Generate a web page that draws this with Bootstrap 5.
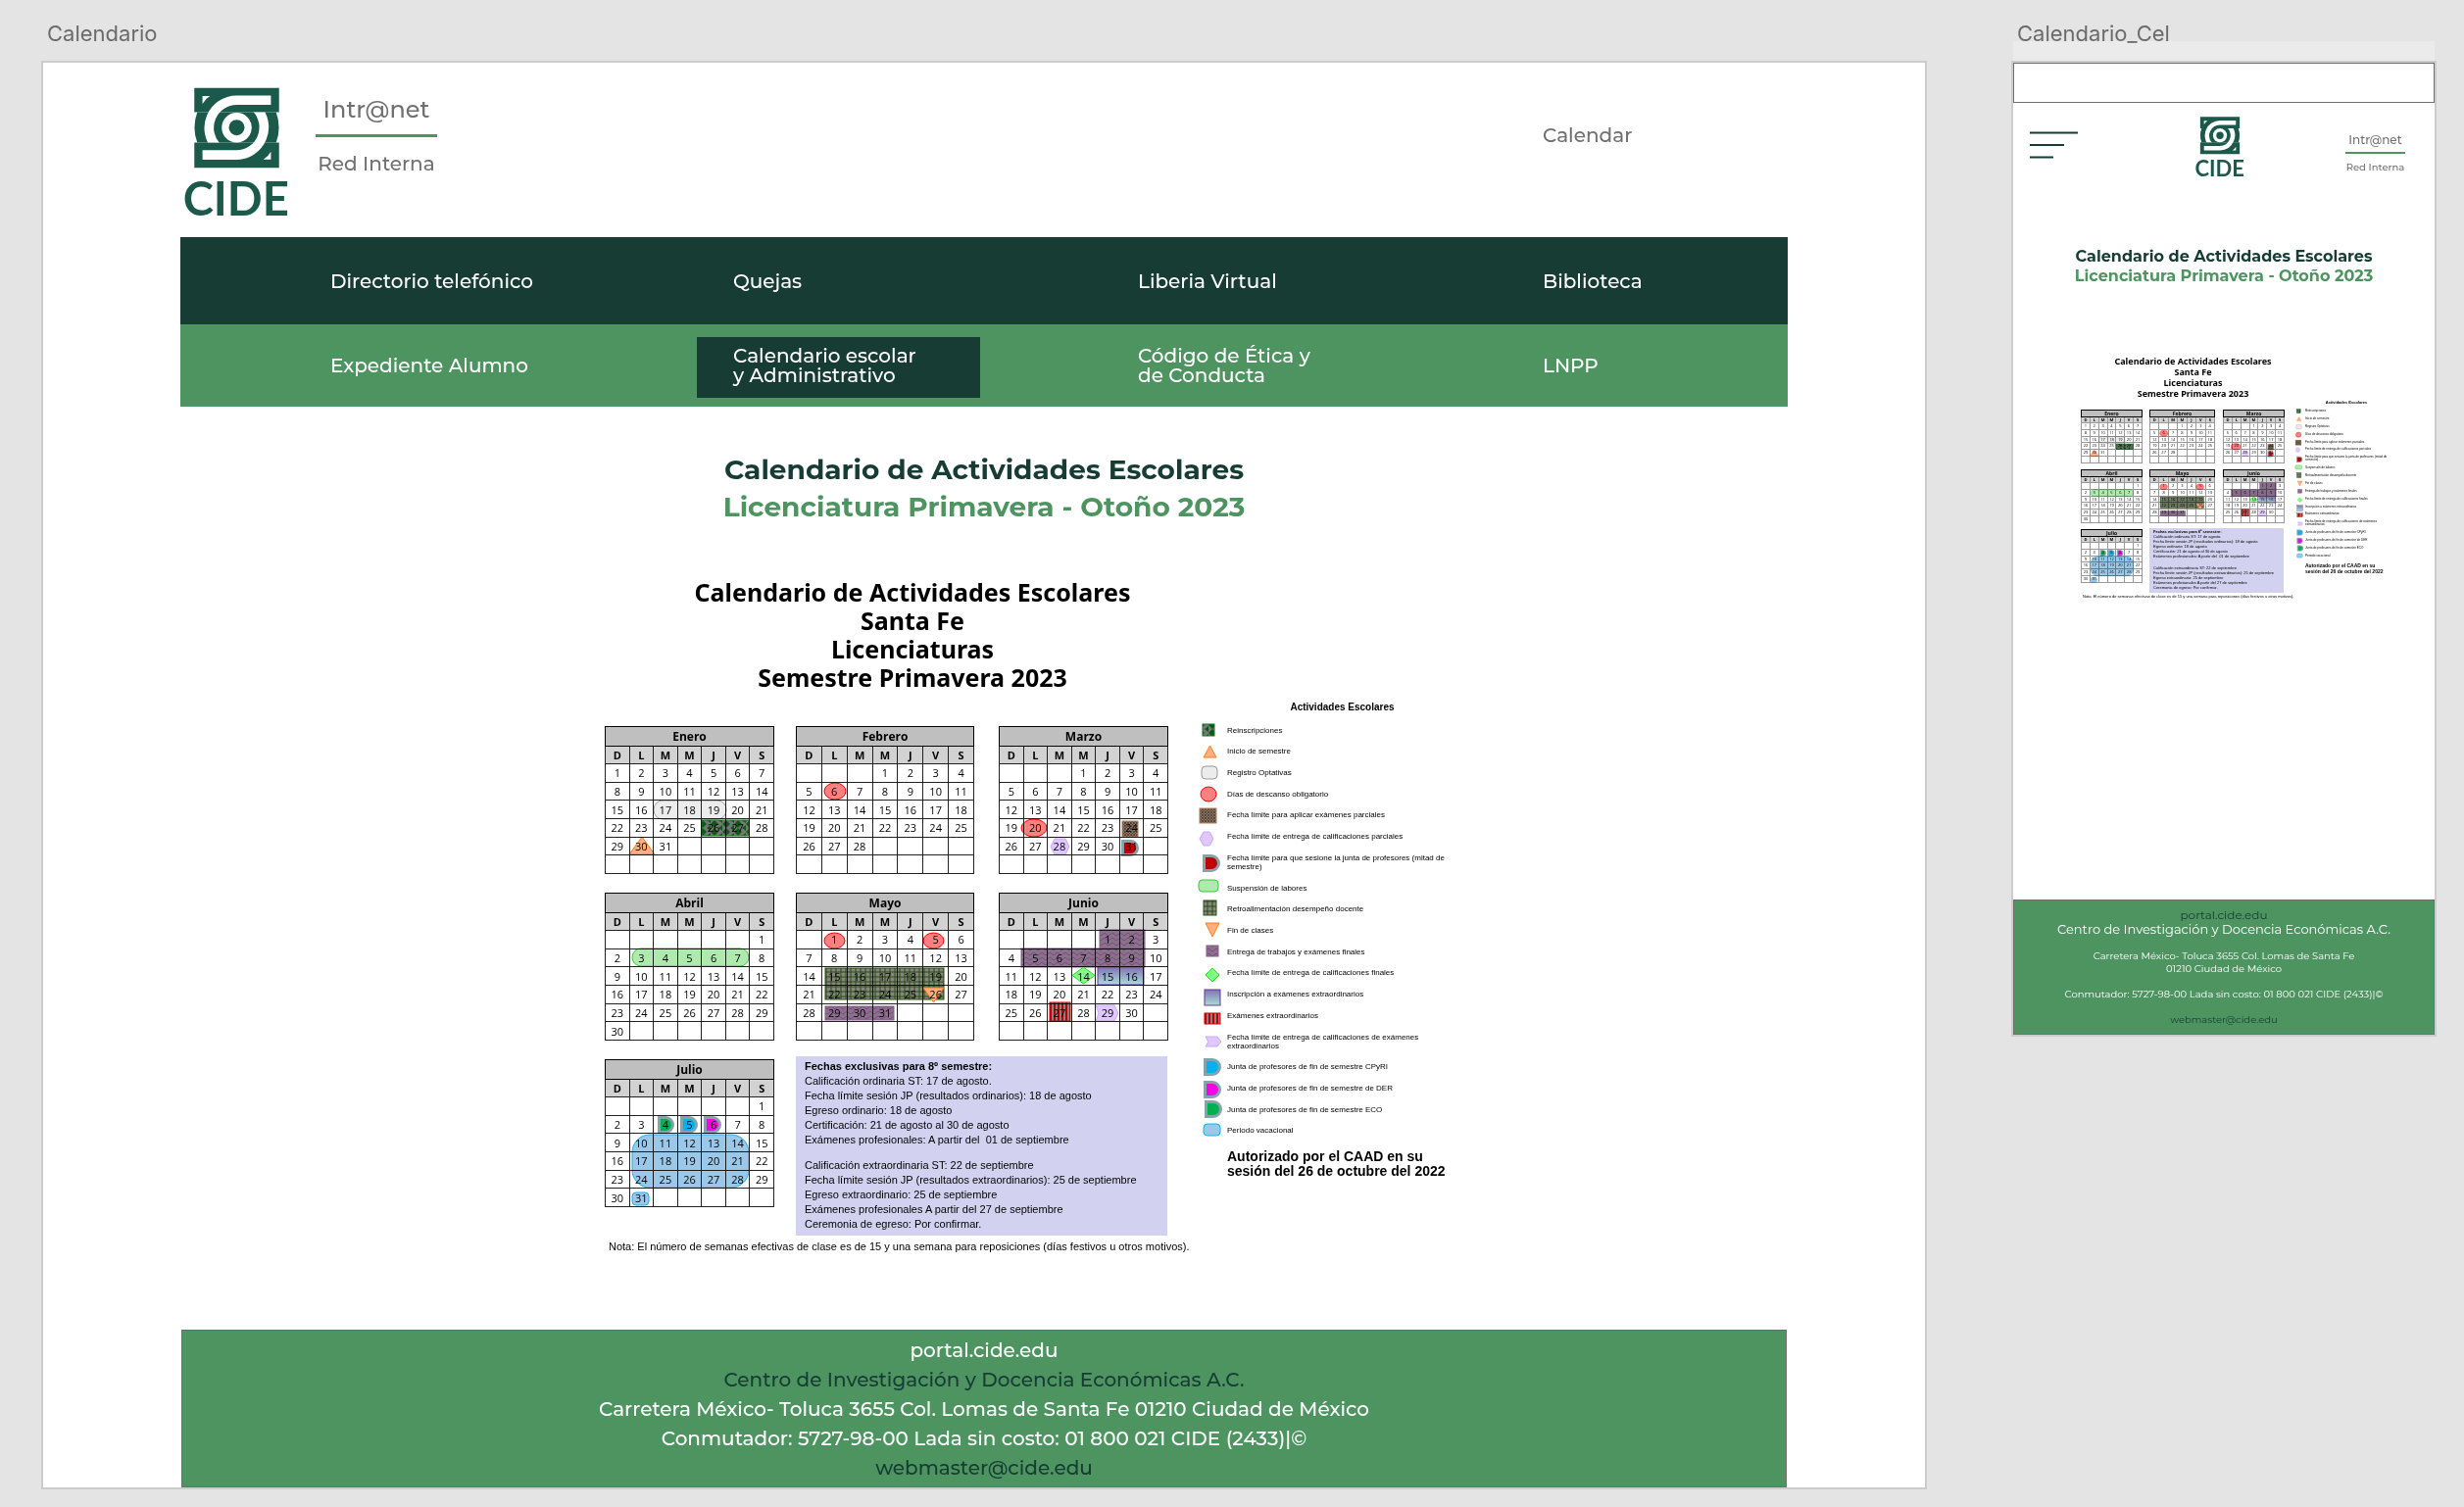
<!DOCTYPE html>
<html lang="es">
<head>
<meta charset="utf-8">
<meta name="viewport" content="width=device-width, initial-scale=1">
<title>Calendario escolar - CIDE</title>
<link href="https://cdn.jsdelivr.net/npm/bootstrap@5.3.0/dist/css/bootstrap.min.css" rel="stylesheet">
<style>
  :root { --pine: #163c33; --leaf: #4d9461; --slate: #707070; }
  body { background: #e4e4e4; font-family: Montserrat, Inter, sans-serif; color: var(--slate); font-size: 20px; line-height: 24px; }
  a { color: inherit; text-decoration: none; }
  .boards { padding: 0 28px 18px 42px; gap: 86px; }
  .board-web { flex: 1 1 0; min-width: 0; }
  .board-cel { flex: 0 0 434px; }
  .board-tag { height: 62px; padding: 22px 6px 0; font: 22px/24px Inter, sans-serif; color: #6b6b6b; }
  .board-cel .board-tag { margin: 0 2px; padding-left: 4px; background: linear-gradient(transparent 42px, #ebebeb 42px); }
  .sheet { background: #fff; border: 2px solid #ccc; }
  .txt-pine { color: var(--pine); }
  .txt-leaf { color: var(--leaf); }

  /* web board */
  .page-web { padding: 0 140px; }
  .top-web { height: 178px; padding: 25px 0 0 4px; font-weight: 500; }
  .logo-web { width: 107px; height: 133px; }
  .logo-cel { width: 50px; height: 62px; }
  .brand-web { margin-left: 27px; padding-top: 8px; width: 124px; }
  .brand-web .brand-a { font-size: 24px; line-height: 30px; padding-bottom: 10px; border-bottom: 3px solid var(--leaf); margin-bottom: 15px; }
  .top-link { width: 250px; padding-top: 37px; }
  .nav-line { display: grid; grid-template-columns: 411fr 413fr 413fr 250fr; align-items: center; padding-left: 153px; color: #fff; font-weight: 500; line-height: 20px; }
  .nav-one { background: var(--pine); height: 89px; }
  .nav-two { background: var(--leaf); height: 84px; }
  .nav-here { background: var(--pine); width: 289px; margin: 4px 0 0 -37px; padding: 9px 37px 13px; }
  .head-web { padding-top: 45px; font-size: 28px; line-height: 38px; font-weight: 700; margin: 0 0 54px; }
  .foot-web { margin: 77px 1px 0; padding: 5px 0 4px; background: var(--leaf); border: 1px solid #707070; color: #fff; font-weight: 500; line-height: 30px; }

  /* phone board */
  .status-bar { height: 41px; border: 1px solid #707070; }
  .top-cel { display: grid; grid-template-columns: 169px 1fr 61px; padding: 14px 30px 0 17px; }
  .menu-btn { height: 58px; width: 49px; }
  .brand-cel { font-size: 10px; line-height: 12px; padding-top: 16px; font-weight: 500; }
  .brand-cel .brand-a { font-size: 12px; line-height: 16px; padding-bottom: 4px; border-bottom: 2px solid var(--leaf); margin-bottom: 8px; }
  .head-cel { margin: 71px 0; font-size: 16px; line-height: 20px; font-weight: 700; }
  .foot-cel { margin-top: 307px; padding: 7px 0 8px; background: var(--leaf); border: 1px solid #707070; color: #fff; font-size: 10px; line-height: 13px; }
  .foot-cel p { margin: 0 0 13px; }
  .foot-cel .foot-link { font-size: 12px; line-height: 15px; }
  .foot-cel .foot-big { font-size: 13px; line-height: 15px; }

  /* calendar figure, drawn at two sizes */
  .fig { color: #000; margin: 0 auto; --title: 25px; --title-lh: 29px; --title-w: 628px;
    --left-pad: 93px; --fig-w: 960px; --body-gap: 10px; --left-w: 575px; --left-top: 25px; --cols: 173px 185px 173px; --col-gap: 22px; --row-gap: 19px;
    --tab-h: 151px; --wide: 182px; --cap-h: 20px; --row-h: 18px; --day: 11px; --cap: 12px; --line: #222;
    --box-h: 183px; --box-up: -3px; --box-pad: 3px 9px; --txt: 11px; --txt-lh: 15px; --blank: 11px; --note-up: 4px;
    --leg-gap: 29px; --leg-w: 297px; --leg-title: 10px; --leg-title-lh: 12px; --leg-up: 8px; --leg-h: 427px; --leg: 8px; --leg-lh: 9px; --item: 18px; --item-two: 27px; --ico-w: 26px; --ico-gap: 5px;
    --auth: 14px; --auth-lh: 15px; --auth-up: 10px; }
  .fig-cel { --title: 9px; --title-lh: 11px; --title-w: 229px;
    --left-pad: 24px; --fig-w: 340px; --body-gap: 2px; --left-w: 208px; --left-top: 9px; --cols: 63px 68px 63px; --col-gap: 7px; --row-gap: 6px;
    --tab-h: 55px; --wide: 67px; --cap-h: 7px; --row-h: 6px; --day: 4px; --cap: 5px; --line: #999;
    --box-h: 66px; --box-up: -1px; --box-pad: 1px 4px; --txt: 4px; --txt-lh: 5px; --blank: 7px; --note-up: 1px;
    --leg-gap: 10px; --leg-w: 106px; --leg-title: 4px; --leg-title-lh: 4px; --leg-up: 3px; --leg-h: 155px; --leg: 3px; --leg-lh: 3px; --item: 7px; --item-two: 10px; --ico-w: 9px; --ico-gap: 2px;
    --auth: 5px; --auth-lh: 6px; --auth-up: 3px; }
  .fig { width: var(--fig-w); padding-left: var(--left-pad); }
  .fig-title { width: var(--title-w); text-align: center; font: 700 var(--title)/var(--title-lh) "Noto Sans", sans-serif; margin: 0 0 var(--body-gap); }
  .fig-left { flex: 0 0 var(--left-w); width: var(--left-w); min-width: 0; padding-top: var(--left-top); }
  .months { display: grid; grid-template-columns: var(--cols); gap: var(--row-gap) var(--col-gap); align-items: start; }
  .month { position: relative; }
  .month:nth-child(3n+2) { width: var(--wide); }
  .month svg { position: absolute; inset: 0; width: 100%; height: 100%; mix-blend-mode: multiply; }
  .month table { width: 100%; height: var(--tab-h); table-layout: fixed; border-collapse: collapse; text-align: center; font: var(--day)/1 "Open Sans", sans-serif; }
  .month th, .month td { padding: 0; border: 1px solid var(--line); vertical-align: middle; }
  .month tr { height: var(--row-h); }
  .month tr.cap-row { height: var(--cap-h); }
  .month .cap-row th { background: #bfbfbf; font-size: var(--cap); border-color: #000; }
  .month .dow-row th { background: #d2d2d2; font-weight: 700; }
  .dates-box { grid-column: 2 / 4; height: var(--box-h); margin: var(--box-up) 1px 0 0; padding: var(--box-pad); background: #d2d2f0; font: var(--txt)/var(--txt-lh) "Liberation Sans", sans-serif; white-space: nowrap; }
  .dates-box p { margin: 0; }
  .dates-box p.gap-before { margin-top: var(--blank); }
  .fig-note { margin: var(--note-up) 0 0 4px; font: var(--txt)/var(--txt-lh) "Liberation Sans", sans-serif; white-space: nowrap; }
  .fig-cel .fig-note { margin-left: 2px; }
  .legend-col { flex: 0 0 var(--leg-w); margin-left: var(--leg-gap); font: var(--leg)/var(--leg-lh) "Liberation Sans", sans-serif; white-space: nowrap; }
  .legend-title { font: 700 var(--leg-title)/var(--leg-title-lh) "Liberation Sans", sans-serif; text-align: center; margin: 0 0 var(--leg-up); }
  .legend-list { height: var(--leg-h); margin: 0; }
  .legend-list li { height: var(--item); gap: var(--ico-gap); }
  .legend-list li.two { height: var(--item-two); }
  .legend-list svg { width: var(--ico-w); height: var(--item); overflow: visible; flex: none; }
  .auth { font-weight: 700; font-size: var(--auth); line-height: var(--auth-lh); margin: var(--auth-up) 0 0 calc(var(--ico-w) + var(--ico-gap)); }
</style>
<script src="https://cdn.jsdelivr.net/npm/bootstrap@5.3.0/dist/js/bootstrap.bundle.min.js"></script>
</head>
<body>
<svg width="0" height="0" class="position-absolute" aria-hidden="true">
  <defs>
    <clipPath id="cutTop"><rect x="50" y="30" width="270" height="168"/></clipPath>
    <clipPath id="cutBot"><rect x="50" y="105" width="270" height="168"/></clipPath>
    <symbol id="cide" viewBox="25 28 320 400">
      <g fill="#1b5a4a"><path d="M55 30H315V105H55zM55 198H315V275H55z"/><path d="M64 105H306Q323 152 306 198H64Q47 152 64 105z"/></g>
      <path d="M80 55H103Q88 64 80 79zM290 250H267Q282 241 290 226z" fill="#fff"/>
      <g fill="none" stroke="#fff" stroke-width="29">
        <path clip-path="url(#cutTop)" d="M290 68H185A85 85 0 0 0 125 213"/>
        <path clip-path="url(#cutBot)" d="M80 236H185A85 85 0 0 0 245 92"/>
      </g>
      <circle cx="185" cy="152" r="46" fill="#fff"/><circle cx="185" cy="152" r="24" fill="#1b5a4a"/>
      <text x="20" y="422" font-family="Lato, sans-serif" font-weight="700" font-size="142" fill="#1b5a4a">CIDE</text>
    </symbol>
    <pattern id="pReins" width="12" height="8" patternUnits="userSpaceOnUse"><rect width="12" height="8" fill="#777"/><path d="M0 4L4 0L8 4L4 8zM8 0h4v3zM8 8h4v-3z" fill="#0a5a14"/></pattern>
    <pattern id="pBrown" width="3" height="3" patternUnits="userSpaceOnUse"><rect width="3" height="3" fill="#8a7565"/><path d="M0 0L3 3M3 0L0 3" stroke="#5a483c"/></pattern>
    <pattern id="pGrid" width="5" height="5" patternUnits="userSpaceOnUse"><rect width="5" height="5" fill="#84887c"/><path d="M0 1H5M1 0V5" stroke="#2c4a16" stroke-width="1"/></pattern>
    <pattern id="pWave" width="8" height="5" patternUnits="userSpaceOnUse"><rect width="8" height="5" fill="#86758a"/><path d="M0 4L4 1L8 4" fill="none" stroke="#8a3f86" stroke-width="1"/></pattern>
    <pattern id="pBars" width="4" height="4" patternUnits="userSpaceOnUse"><rect width="4" height="4" fill="#8c8080"/><path d="M1 0V4" stroke="#b80000" stroke-width="2"/></pattern>
    <linearGradient id="gIns" x2="0" y2="1"><stop offset="0" stop-color="#8273b4"/><stop offset="1" stop-color="#a9dcd8"/></linearGradient>
  </defs>
</svg>

<div class="boards d-flex align-items-start">
  <section class="board-web">
    <div class="board-tag">Calendario</div>
    <div class="sheet page-web">
      <header class="top-web d-flex align-items-start">
        <a href="#" aria-label="CIDE"><svg class="logo-web d-block"><use href="#cide"/></svg></a>
        <div class="brand-web text-center text-nowrap">
          <div class="brand-a">Intr@net</div>
          <div>Red Interna</div>
        </div>
        <a href="#" class="top-link ms-auto">Calendar</a>
      </header>
      <nav>
        <div class="nav-line nav-one">
          <a href="#">Directorio telefónico</a><a href="#">Quejas</a><a href="#">Liberia Virtual</a><a href="#">Biblioteca</a>
        </div>
        <div class="nav-line nav-two">
          <a href="#">Expediente Alumno</a>
          <a href="#" class="nav-here" aria-current="page">Calendario escolar<br>y Administrativo</a>
          <a href="#">Código de Ética y<br>de Conducta</a>
          <a href="#">LNPP</a>
        </div>
      </nav>
      <main>
        <h1 class="head-web text-center txt-pine">Calendario de Actividades Escolares<br><span class="txt-leaf">Licenciatura Primavera - Otoño 2023</span></h1>
        <div class="fig" data-figure></div>
      </main>
      <footer class="foot-web text-center">
        <a href="#" class="d-block">portal.cide.edu</a>
        <div class="txt-pine">Centro de Investigación y Docencia Económicas A.C.</div>
        <div>Carretera México- Toluca 3655 Col. Lomas de Santa Fe 01210 Ciudad de México</div>
        <div>Conmutador: 5727-98-00 Lada sin costo: 01 800 021 CIDE (2433)|©</div>
        <a href="#" class="d-block txt-pine">webmaster@cide.edu</a>
      </footer>
    </div>
  </section>

  <section class="board-cel">
    <div class="board-tag">Calendario_Cel</div>
    <div class="sheet">
      <div class="status-bar"></div>
      <header class="top-cel">
        <button type="button" class="menu-btn btn p-0 border-0 rounded-0" aria-label="Menú">
          <svg class="d-block" width="49" height="58"><path d="M0 16.5H49M0 29H35M0 41.5H24" stroke="#163c33" stroke-width="2"/></svg>
        </button>
        <a href="#" aria-label="CIDE"><svg class="logo-cel d-block"><use href="#cide"/></svg></a>
        <div class="brand-cel text-center text-nowrap">
          <div class="brand-a">Intr@net</div>
          <div>Red Interna</div>
        </div>
      </header>
      <main>
        <h2 class="head-cel text-center txt-pine">Calendario de Actividades Escolares<br><span class="txt-leaf">Licenciatura Primavera - Otoño 2023</span></h2>
        <div class="fig fig-cel" data-figure></div>
      </main>
      <footer class="foot-cel text-center">
        <a href="#" class="foot-link d-block txt-pine">portal.cide.edu</a>
        <p class="foot-big">Centro de Investigación y Docencia Económicas A.C.</p>
        <p>Carretera México- Toluca 3655 Col. Lomas de Santa Fe<br>01210 Ciudad de México</p>
        <p>Conmutador: 5727-98-00 Lada sin costo: 01 800 021 CIDE (2433)|©</p>
        <a href="#" class="d-block txt-pine">webmaster@cide.edu</a>
      </footer>
    </div>
  </section>
</div>

<script>
  // Shapes take left, top, right, bottom in the drawing's own units.
  const rr = (x, y, x2, y2, r, fill, stroke) => `<rect x="${x}" y="${y}" width="${x2 - x}" height="${y2 - y}" rx="${r}" fill="${fill}" stroke="${stroke}"/>`;
  const el = (x, y, x2, y2) => `<ellipse cx="${(x + x2) / 2}" cy="${(y + y2) / 2}" rx="${(x2 - x) / 2}" ry="${(y2 - y) / 2}" fill="#ff8080" stroke="#f00"/>`;
  const pl = (pts, fill, stroke) => `<polygon points="${pts}" fill="${fill}" stroke="${stroke}"/>`;
  const dee = (x, y, x2, y2, fill) => { const r = (y2 - y - 3) / 2; x += 1.5; y += 1.5; x2 -= 1.5; y2 -= 1.5;
    return `<path d="M${x} ${y}H${x2 - r}A${r} ${r} 0 0 1 ${x2 - r} ${y2}H${x}z" fill="${fill}" stroke="#86a3ab" stroke-width="3"/>`; };
  const up = (x, y, x2, y2) => pl(`${x},${y2} ${(x + x2) / 2},${y} ${x2},${y2}`, '#ffb080', '#ff7a1a');
  const down = (x, y, x2, y2) => pl(`${x},${y} ${x2},${y} ${(x + x2) / 2},${y2}`, '#ffb080', '#ff7a1a');
  const hex = (x, y, x2, y2) => pl(`${x},${(y + y2) / 2} ${x + 4},${y} ${x2 - 4},${y} ${x2},${(y + y2) / 2} ${x2 - 4},${y2} ${x + 4},${y2}`, '#e0c8ff', '#c8a8f4');
  const dia = (x, y, x2, y2) => pl(`${x},${(y + y2) / 2} ${(x + x2) / 2},${y} ${x2},${(y + y2) / 2} ${(x + x2) / 2},${y2}`, '#80ff80', '#22e022');
  const chev = (x, y, x2, y2) => pl(`${x},${y} ${x2 - 4},${y} ${x2},${(y + y2) / 2} ${x2 - 4},${y2} ${x},${y2} ${x + 3},${(y + y2) / 2}`, '#e0c8ff', '#c8a8f4');
  const wave = (x, y, x2, y2) => rr(x, y, x2, y2, 0, 'url(#pWave)', '#8a5a90');

  // name, first weekday column, number of days, drawing width, marks
  const months = [
    ['Enero', 0, 31, 173, rr(50, 76, 124, 95, 9, '#ececec', '#999') + rr(99, 96, 147, 112, 0, 'url(#pReins)', '#157a20') + up(25, 113, 51, 131)],
    ['Febrero', 3, 28, 182, el(29, 58, 51, 75)],
    ['Marzo', 3, 31, 173, el(23, 95, 49, 113) + rr(126, 97, 142, 113, 0, 'url(#pBrown)', '#b08060') + hex(53, 115, 72, 131) + dee(125, 116, 143, 133, '#c00000')],
    ['Abril', 6, 30, 173, rr(28, 57, 147, 75, 9, '#aeeaae', '#3c3')],
    ['Mayo', 1, 31, 182, el(29, 41, 50, 57) + el(130, 41, 151, 57) + rr(30, 77, 151, 109, 0, 'url(#pGrid)', '#26520f') + down(130, 97, 151, 112) + wave(30, 116, 100, 130)],
    ['Junio', 4, 30, 173, wave(103, 38, 149, 57) + wave(23, 57, 149, 76) + dia(75, 76, 98, 93) + rr(101, 76, 148, 94, 0, 'url(#gIns)', '#6a35a0') + rr(52, 112, 73, 131, 0, 'url(#pBars)', '#e00000') + chev(99, 115, 122, 131)],
    ['Julio', 6, 31, 173, dee(54, 58, 71, 76, '#00b050') + dee(77, 58, 95, 76, '#00b0f0') + dee(101, 58, 119, 76, '#ff00e6') + rr(28, 77, 147, 131, 18, '#9bc8e8', '#1ab0ee') + rr(28, 136, 45, 149, 4, '#9bc8e8', '#1ab0ee')]
  ];
  const legend = [
    ['Reinscripciones', rr(6, 3, 18, 15, 0, 'url(#pReins)', '#157a20')],
    ['Inicio de semestre', up(7, 3, 20, 15)],
    ['Registro Optativas', rr(5, 3, 21, 16, 4, '#ececec', '#999')],
    ['Días de descanso obligatorio', el(4, 2, 20, 17)],
    ['Fecha límite para aplicar exámenes parciales', rr(3, 2, 20, 17, 0, 'url(#pBrown)', '#b08060')],
    ['Fecha límite de entrega de calificaciones parciales', hex(3, 4, 17, 18)],
    ['Fecha límite para que sesione la junta de profesores (mitad de<br>semestre)', dee(6, 1, 24, 19, '#c00000')],
    ['Suspensión de labores', rr(2, 1, 22, 13, 4, '#aeeaae', '#3c3')],
    ['Retroalimentación desempeño docente', rr(7, 0, 20, 15, 0, 'url(#pGrid)', '#26520f')],
    ['Fin de clases', down(9, 2, 23, 16)],
    ['Entrega de trabajos y exámenes finales', wave(10, 3, 22, 14)],
    ['Fecha límite de entrega de calificaciones finales', dia(9, 4, 23, 18)],
    ['Inscripción a exámenes extraordinarios', rr(8, 4, 24, 20, 0, 'url(#gIns)', '#6a35a0')],
    ['Exámenes extraordinarios', rr(8, 7, 24, 18, 0, 'url(#pBars)', '#e00000')],
    ['Fecha límite de entrega de calificaciones de exámenes<br>extraordinarios', chev(9, 4, 25, 14)],
    ['Junta de profesores de fin de semestre CPyRI', dee(7, 0, 25, 18, '#00b0f0')],
    ['Junta de profesores de fin de semestre de DER', dee(7, 1, 25, 19, '#ff00e6')],
    ['Junta de profesores de fin de semestre ECO', dee(8, 0, 26, 18, '#00b050')],
    ['Periodo vacacional', rr(7, 2, 24, 14, 4, '#9bc8e8', '#1ab0ee')]
  ];
  const dates = ['<b>Fechas exclusivas para 8º semestre:</b>', 'Calificación ordinaria ST: 17 de agosto.', 'Fecha límite sesión JP (resultados ordinarios): 18 de agosto',
    'Egreso ordinario: 18 de agosto', 'Certificación: 21 de agosto al 30 de agosto', 'Exámenes profesionales: A partir del&nbsp; 01 de septiembre',
    'Calificación extraordinaria ST: 22 de septiembre', 'Fecha límite sesión JP (resultados extraordinarios): 25 de septiembre', 'Egreso extraordinario: 25 de septiembre',
    'Exámenes profesionales A partir del 27 de septiembre', 'Ceremonia de egreso: Por confirmar.'];

  const month = ([name, start, count, width, marks]) => {
    let rows = '';
    for (let w = 0; w < 6; w++) {
      rows += '<tr>';
      for (let d = 0; d < 7; d++) { const n = w * 7 + d - start + 1; rows += `<td>${n > 0 && n <= count ? n : ''}</td>`; }
      rows += '</tr>';
    }
    return `<div class="month"><table><thead><tr class="cap-row"><th colspan="7">${name}</th></tr><tr class="dow-row">${[...'DLMMJVS'].map(c => `<th>${c}</th>`).join('')}</tr></thead><tbody>${rows}</tbody></table>
      <svg viewBox="0 0 ${width} 151" preserveAspectRatio="none" aria-hidden="true">${marks}</svg></div>`;
  };
  const figure = `
    <h3 class="fig-title">Calendario de Actividades Escolares<br>Santa Fe<br>Licenciaturas<br>Semestre Primavera 2023</h3>
    <div class="d-flex align-items-start">
      <div class="fig-left">
        <div class="months">${months.map(month).join('')}
          <div class="dates-box">${dates.map((t, i) => `<p${i === 6 ? ' class="gap-before"' : ''}>${t}</p>`).join('')}</div>
        </div>
        <p class="fig-note">Nota: El número de semanas efectivas de clase es de 15 y una semana para reposiciones (días festivos u otros motivos).</p>
      </div>
      <div class="legend-col">
        <h4 class="legend-title">Actividades Escolares</h4>
        <ul class="legend-list list-unstyled d-flex flex-column justify-content-between">${legend.map(([t, s]) => `<li class="d-flex align-items-center${t.includes('<br>') ? ' two' : ''}"><svg viewBox="0 0 26 18" aria-hidden="true">${s}</svg><span>${t}</span></li>`).join('')}</ul>
        <p class="auth">Autorizado por el CAAD en su<br>sesión del 26 de octubre del 2022</p>
      </div>
    </div>`;
  document.querySelectorAll('[data-figure]').forEach(f => f.innerHTML = figure);
</script>
</body>
</html>
